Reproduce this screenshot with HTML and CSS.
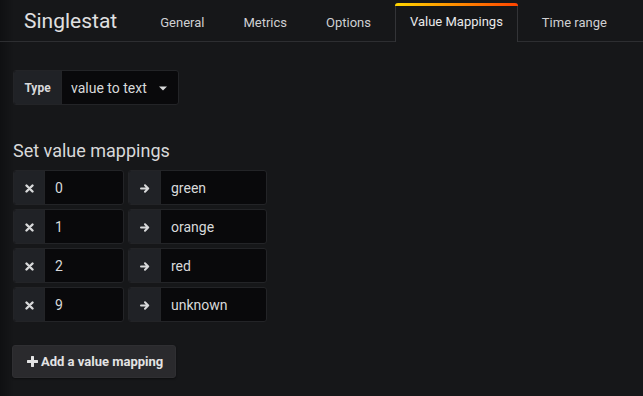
FILE: index.html
```html
<!DOCTYPE html>
<html>
<head>
<meta charset="utf-8">
<link rel="stylesheet" href="styles.css">
</head>
<body>
<div class="page">
  <header class="header">
    <div class="title">Singlestat</div>
    <nav class="tabs">
      <div class="tab">General</div>
      <div class="tab">Metrics</div>
      <div class="tab">Options</div>
      <div class="tab active">Value Mappings</div>
      <div class="tab">Time range</div>
    </nav>
  </header>
  <main class="content">
    <div class="form type-form">
      <div class="label type-label">Type</div>
      <div class="select">
        <span>value to text</span>
        <svg class="caret" width="8" height="5" viewBox="0 0 8 5"><path d="M0 0.5 H8 L4 4.5 Z" fill="#d8d9da"/></svg>
      </div>
    </div>
    <h3 class="section-title">Set value mappings</h3>
    <div class="rows">
      <div class="row">
        <div class="form g1"><div class="label icon"><svg width="9" height="9" viewBox="0 0 9 9"><path d="M1.5 1.5 L7.5 7.5 M7.5 1.5 L1.5 7.5" stroke="#d8d9da" stroke-width="2.4" stroke-linecap="round"/></svg></div><div class="input">0</div></div>
        <div class="form g2"><div class="label icon"><svg width="10" height="9" viewBox="0 0 10 9"><path d="M1 4.5 H8.2 M5 1.3 L8.2 4.5 L5 7.7" stroke="#d8d9da" stroke-width="2" fill="none" stroke-linecap="round" stroke-linejoin="round"/></svg></div><div class="input">green</div></div>
      </div>
      <div class="row">
        <div class="form g1"><div class="label icon"><svg width="9" height="9" viewBox="0 0 9 9"><path d="M1.5 1.5 L7.5 7.5 M7.5 1.5 L1.5 7.5" stroke="#d8d9da" stroke-width="2.4" stroke-linecap="round"/></svg></div><div class="input">1</div></div>
        <div class="form g2"><div class="label icon"><svg width="10" height="9" viewBox="0 0 10 9"><path d="M1 4.5 H8.2 M5 1.3 L8.2 4.5 L5 7.7" stroke="#d8d9da" stroke-width="2" fill="none" stroke-linecap="round" stroke-linejoin="round"/></svg></div><div class="input">orange</div></div>
      </div>
      <div class="row">
        <div class="form g1"><div class="label icon"><svg width="9" height="9" viewBox="0 0 9 9"><path d="M1.5 1.5 L7.5 7.5 M7.5 1.5 L1.5 7.5" stroke="#d8d9da" stroke-width="2.4" stroke-linecap="round"/></svg></div><div class="input">2</div></div>
        <div class="form g2"><div class="label icon"><svg width="10" height="9" viewBox="0 0 10 9"><path d="M1 4.5 H8.2 M5 1.3 L8.2 4.5 L5 7.7" stroke="#d8d9da" stroke-width="2" fill="none" stroke-linecap="round" stroke-linejoin="round"/></svg></div><div class="input">red</div></div>
      </div>
      <div class="row">
        <div class="form g1"><div class="label icon"><svg width="9" height="9" viewBox="0 0 9 9"><path d="M1.5 1.5 L7.5 7.5 M7.5 1.5 L1.5 7.5" stroke="#d8d9da" stroke-width="2.4" stroke-linecap="round"/></svg></div><div class="input">9</div></div>
        <div class="form g2"><div class="label icon"><svg width="10" height="9" viewBox="0 0 10 9"><path d="M1 4.5 H8.2 M5 1.3 L8.2 4.5 L5 7.7" stroke="#d8d9da" stroke-width="2" fill="none" stroke-linecap="round" stroke-linejoin="round"/></svg></div><div class="input">unknown</div></div>
      </div>
    </div>
    <button class="btn"><svg width="11" height="11" viewBox="0 0 11 11"><path d="M5.5 1 V10 M1 5.5 H10" stroke="#e3e3e3" stroke-width="3" stroke-linecap="round"/></svg><span>Add a value mapping</span></button>
  </main>
</div>
</body>
</html>
```
FILE: styles.css
```css
* { box-sizing: border-box; }
html, body { margin: 0; padding: 0; }
body {
  width: 643px;
  height: 396px;
  overflow: hidden;
  background: linear-gradient(to right, #0f1012 0px, #161719 14px) #161719;
  font-family: Roboto, "Liberation Sans", sans-serif;
  color: #d8d9da;
}
.header {
  display: flex;
  align-items: flex-end;
  height: 42px;
  border-bottom: 1px solid #2d2e31;
  padding-left: 24px;
}
.title {
  font-size: 21px;
  color: #e0e0e1;
  align-self: center;
  margin-top: 1px;
  margin-right: 28px;
}
.tabs {
  display: flex;
  gap: 9px;
  margin-bottom: -1px;
}
.tab {
  height: 39px;
  padding: 0 14px 2px;
  display: flex;
  align-items: center;
  font-size: 13px;
  color: #cfd0d2;
  border: 1px solid transparent;
  border-bottom: none;
}
.tab.active {
  color: #e9e9ea;
  background: #161719;
  border-color: #333437;
  border-top: none;
  position: relative;
  border-radius: 3px 3px 0 0;
}
.tab.active::before {
  content: "";
  position: absolute;
  left: -1px;
  right: -1px;
  top: 0;
  height: 3px;
  border-radius: 3px 3px 0 0;
  background: linear-gradient(to right, #ffd500, #ff4400);
}
.content {
  padding: 28px 0 0 13px;
}
.form {
  display: flex;
  height: 35px;
  border: 1px solid #232427;
  border-radius: 3px;
  overflow: hidden;
  background: #09090b;
}
.type-form { width: 166px; }
.label {
  background: #202226;
  display: flex;
  align-items: center;
  justify-content: center;
  border-right: 1px solid #232427;
}
.type-label {
  width: 48px;
  font-size: 12px;
  font-weight: 700;
  color: #d8d9da;
}
.select {
  flex: 1;
  display: flex;
  align-items: center;
  justify-content: space-between;
  padding: 0 11px 0 9px;
  font-size: 14px;
  color: #d8d9da;
}
.caret { margin-top: 1px; }
.section-title {
  margin: 35px 0 0 0;
  font-size: 18px;
  font-weight: 400;
  color: #d8d9da;
  line-height: 22px;
  height: 22px;
}
.rows {
  margin-top: 8px;
  display: flex;
  flex-direction: column;
  gap: 4px;
}
.row {
  display: flex;
  gap: 4px;
}
.g1 { width: 111px; }
.g2 { width: 139px; }
.icon { width: 31px; padding-top: 1px; }
.g2 .icon { width: 32px; }
.input {
  flex: 1;
  display: flex;
  align-items: center;
  padding-left: 10px;
  font-size: 14px;
  color: #d8d9da;
}
.btn {
  margin: 23px 0 0 -1px;
  width: 164px;
  height: 33px;
  display: flex;
  align-items: center;
  gap: 3px;
  padding: 0 0 0 14px;
  background: #2a2a2d;
  border: 1px solid #2f2f32;
  border-radius: 3px;
  font-family: Roboto, "Liberation Sans", sans-serif;
  font-size: 13px;
  font-weight: 700;
  color: #e3e3e3;
  box-shadow: 0 1px 2px rgba(0,0,0,0.4);
}
```
